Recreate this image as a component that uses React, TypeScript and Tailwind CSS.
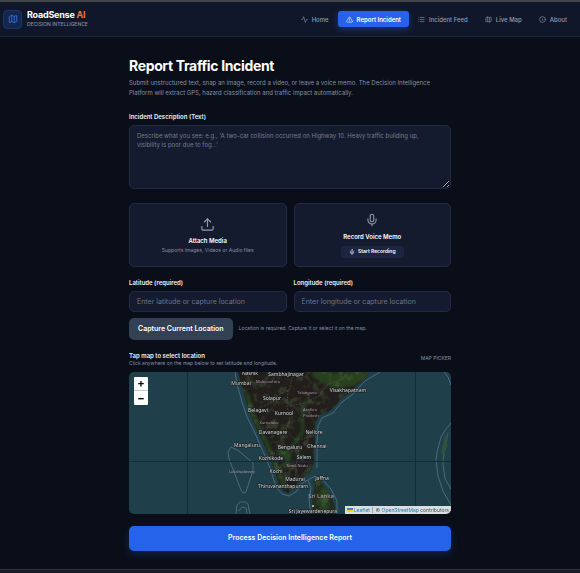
import { useState } from 'react'
import type { LucideIcon } from 'lucide-react'
import { Activity, Info, List, Map, Mic, TriangleAlert, Upload } from 'lucide-react'
import { clsx } from 'clsx'

interface NavItem {
  label: string
  icon: LucideIcon
  active?: boolean
}

interface MapLabel {
  text: string
  x: number
  y: number
  region?: boolean
}

const NAV_ITEMS: NavItem[] = [
  { label: 'Home', icon: Activity },
  { label: 'Report Incident', icon: TriangleAlert, active: true },
  { label: 'Incident Feed', icon: List },
  { label: 'Live Map', icon: Map },
  { label: 'About', icon: Info },
]

const MAP_LABELS: MapLabel[] = [
  { text: 'Nashik', x: 121, y: 3 },
  { text: 'Sambhajinagar', x: 157, y: 4 },
  { text: 'Mumbai', x: 112, y: 13 },
  { text: 'Maharashtra', x: 139, y: 11, region: true },
  { text: 'Telangana', x: 178, y: 22, region: true },
  { text: 'Visakhapatnam', x: 219, y: 20 },
  { text: 'Solapur', x: 143, y: 28 },
  { text: 'Belagavi', x: 129, y: 40 },
  { text: 'Kurnool', x: 155, y: 43 },
  { text: 'Andhra', x: 181, y: 39, region: true },
  { text: 'Pradesh', x: 182, y: 45, region: true },
  { text: 'Karnataka', x: 140, y: 52, region: true },
  { text: 'Davanagere', x: 144, y: 62 },
  { text: 'Nellore', x: 185, y: 62 },
  { text: 'Mangaluru', x: 118, y: 75 },
  { text: 'Bengaluru', x: 161, y: 77 },
  { text: 'Chennai', x: 188, y: 76 },
  { text: 'Kozhikode', x: 142, y: 88 },
  { text: 'Salem', x: 175, y: 87 },
  { text: 'Tamil Nadu', x: 168, y: 95, region: true },
  { text: 'Lakshadweep', x: 113, y: 101, region: true },
  { text: 'Kochi', x: 147, y: 101 },
  { text: 'Madurai', x: 166, y: 109 },
  { text: 'Jaffna', x: 193, y: 108 },
  { text: 'Thiruvananthapuram', x: 154, y: 116 },
  { text: 'Sri Jayewardenepura', x: 184, y: 141 },
]

const INDIA =
  'M109 0 L111 8 L114 18 L117 30 L122 45 L129 60 L134 71 L140 83 L145 96 L150 113 L155 119 L159 121 L165 116 L169 110 L177 103 L183 98 L185 90 L184 80 L186 70 L185 60 L187 50 L190 43 L198 41 L205 35 L212 27 L220 21 L228 13 L236 7 L241 0 Z'
const INDIA_WATERS =
  'M106 0 L108 12 L113 30 L118 45 L126 61 L131 73 L137 86 L142 99 L147 115 L153 122 L160 124 L168 119 L172 112 L179 108 M188 96 L188 70 L189 54 L193 46 L204 41 L212 31 L224 22 L236 9 L251 0'
const SRI_LANKA =
  'M184 108 L191 108 L195 114 L199 119 L203 126 L206 135 L204 143 L185 143 L183 133 L184 122 L186 114 Z'
const SRI_LANKA_WATERS = 'M182 143 L180 128 L182 116 L179 108 L186 104 L194 108 L202 117 L208 129 L208 143'

function TopBar() {
  return (
    <header className="flex h-[37px] items-center justify-between border-t-2 border-b border-t-[#42454a] border-b-[#1d263a] bg-[#11172a] pr-[5px] pl-[3px]">
      <div className="flex items-center gap-[5px]">
        <div className="flex size-[19px] items-center justify-center rounded-[4px] border border-[#1b3566] bg-[#14264d]">
          <Map className="size-[10px] text-[#3b72dd]" strokeWidth={2} />
        </div>
        <div>
          <div className="text-[9px] leading-[10px] font-bold tracking-tight text-white">
            RoadSense <span className="text-[#ee7634]">AI</span>
          </div>
          <div className="text-[5px] leading-[8px] font-medium text-[#8490a5] uppercase">Decision Intelligence</div>
        </div>
      </div>
      <nav className="flex items-center gap-px">
        {NAV_ITEMS.map(({ label, icon: Icon, active }) => (
          <a
            key={label}
            href="#"
            aria-current={active ? 'page' : undefined}
            className={clsx(
              'flex h-4 items-center gap-1 rounded-[3px] px-2 text-[6px] whitespace-nowrap',
              active
                ? 'bg-[#2563eb] font-semibold text-white shadow-[0_2px_6px_#2563eb66]'
                : 'font-medium text-[#8f9bb0]'
            )}
          >
            <Icon className="size-[7px]" strokeWidth={2} />
            {label}
          </a>
        ))}
      </nav>
    </header>
  )
}

function CoordinateField({ id, label, placeholder }: { id: string; label: string; placeholder: string }) {
  return (
    <div>
      <label htmlFor={id} className="block text-[6px] leading-[9px] font-semibold text-[#eef2f7]">
        {label}
      </label>
      <input
        id={id}
        type="text"
        placeholder={placeholder}
        className="mt-1 block h-[21px] w-full rounded-[5px] border border-[#222b43] bg-[#151b2e] px-[7px] text-[7px] text-white placeholder:text-[#697489]"
      />
    </div>
  )
}

function MapPicker() {
  const [zoom, setZoom] = useState(5)

  return (
    <div className="relative mt-[5px] h-[142px] overflow-hidden rounded-[5px] bg-[#1f404b]" data-zoom={zoom}>
      <svg
        viewBox="0 0 322 142"
        preserveAspectRatio="xMidYMid slice"
        className="block size-full"
        role="img"
        aria-label="Map of southern India and Sri Lanka"
      >
        <defs>
          <clipPath id="land">
            <path d={INDIA} />
            <path d={SRI_LANKA} />
          </clipPath>
          <filter id="terrain" x="0" y="0" width="100%" height="100%">
            <feTurbulence type="fractalNoise" baseFrequency="0.12" numOctaves="4" seed="8" />
            <feColorMatrix values="0 0 0 0 0.17  0 0 0 0 0.28  0 0 0 0 0.12  0 4 0 0 -1.95" />
          </filter>
          <filter id="soft">
            <feGaussianBlur stdDeviation="1.5" />
          </filter>
        </defs>

        {/* land */}
        <path d={INDIA} fill="#211e1b" />
        <path d={SRI_LANKA} fill="#242c1d" />
        <g clipPath="url(#land)">
          <g fill="none" stroke="#284220" filter="url(#soft)" strokeLinecap="round">
            <path d="M118 23 L124 43 L132 60 L141 79 L148 96 L156 115" strokeWidth="4" />
            <path d="M190 0 L205 9 L222 7 L236 0" strokeWidth="15" opacity="0.9" />
            <path d="M177 29 L173 43 L174 59 L164 73 L154 83" strokeWidth="3" />
            <path d="M150 79 L160 83 L157 93" strokeWidth="5" />
            <path d="M196 119 L195 136" strokeWidth="9" />
          </g>
          <rect x="100" width="145" height="142" filter="url(#terrain)" opacity="0.25" />
        </g>

        {/* state borders and roads */}
        <g fill="none" stroke="#766d68" strokeWidth="0.5" strokeDasharray="2 1" opacity="0.8">
          <path d="M122 41 L134 34 L142 31 L151 22 L160 18 L163 7 L170 0" />
          <path d="M159 18 L158 34 L161 47 L157 58 L165 67 L174 67 L185 63" />
          <path d="M161 34 L176 31 L190 24 L199 12 L212 8 L219 0" />
          <path d="M139 78 L148 83 L157 80 L165 74" />
          <path d="M151 83 L156 96 L157 117 M170 72 L168 88 L166 109" />
        </g>

        {/* maritime boundaries */}
        <g fill="none" stroke="#587486" strokeWidth="0.8">
          <path d={INDIA_WATERS} />
          <path d={SRI_LANKA_WATERS} />
          <path d="M102 75 L99 80 L100 87 L112 118 L114 121 L117 120 L124 98 L124 91 L110 79 Z" />
          <path d="M107 142 L108 133 L111 130 L116 130 L119 132 L121 142 M110 139 L113 135 L117 136 L118 142" />
          <path d="M315 0 L319 5 L322 13 M322 51 L317 57 L312 65 L308 80 L307 88 L309 104 L314 119 L322 133" />
          <path d="M319 61 L315 80 L314 92 L316 107 L322 117" />
        </g>
        <path d="M316 64 L319 62 L318 74 L315 83 L312 81 Z M313 87 L315 86 L314 92 Z" fill="#34503e" />

        {/* tile seams */}
        <path d="M58.5 0 V142 M286.5 0 V142 M0 89.5 H322" stroke="#122d35" strokeWidth="1" />

        <g fontFamily='"Noto Sans", sans-serif' textAnchor="middle">
          {MAP_LABELS.map(({ text, x, y, region }) => (
            <text
              key={text}
              x={x}
              y={y}
              fill={region ? '#b092b2' : '#d0d2d2'}
              fontSize={region ? 4 : 5}
              stroke={region ? 'none' : '#1c2022'}
              strokeWidth="1"
              paintOrder="stroke"
            >
              {text}
            </text>
          ))}
          <text x="192" y="126" fill="#b59db9" fontSize="6">
            Sri Lanka
          </text>
        </g>
        <circle cx="184" cy="134" r="1" fill="#d0d2d2" />
      </svg>

      <div className="absolute top-[5px] left-[5px] flex w-[14px] flex-col overflow-hidden rounded-[1px] bg-white text-black">
        <button
          type="button"
          aria-label="Zoom in"
          onClick={() => setZoom(zoom + 1)}
          className="h-[14px] border-b border-[#cccccc] text-[11px] leading-[13px] font-bold"
        >
          +
        </button>
        <button
          type="button"
          aria-label="Zoom out"
          onClick={() => setZoom(zoom - 1)}
          className="h-[14px] text-[11px] leading-[13px] font-bold"
        >
          −
        </button>
      </div>

      <div className="absolute right-0 bottom-0 flex items-center gap-[2px] bg-[#d9dfe1] px-[2px] text-[5px] leading-[8px] text-[#4c5356]">
        <a href="#" className="flex items-center gap-px text-[#1d7fa8]">
          <svg viewBox="0 0 12 8" className="h-1 w-[6px]" aria-hidden="true">
            <path fill="#4C7BE1" d="M0 0h12v4H0z" />
            <path fill="#FFD500" d="M0 4h12v4H0z" />
          </svg>
          Leaflet
        </a>
        <span>|</span>
        <span>
          © <a href="#" className="text-[#1d7fa8]">OpenStreetMap</a> contributors
        </span>
      </div>
    </div>
  )
}

function ReportForm() {
  return (
    <form onSubmit={(e) => e.preventDefault()}>
      <label htmlFor="description" className="block text-[6px] leading-[9px] font-semibold text-[#eef2f7]">
        Incident Description (Text)
      </label>
      <textarea
        id="description"
        placeholder="Describe what you see: e.g., 'A two-car collision occurred on Highway 10. Heavy traffic building up, visibility is poor due to fog...'"
        className="mt-1 block h-16 w-full rounded-[5px] border border-[#222b43] bg-[#151b2e] px-[7px] py-[5px] text-[6px] leading-[9px] text-white placeholder:text-[#727d92]"
      />

      <div className="mt-[14px] grid grid-cols-2 gap-[7px]">
        <label className="flex h-16 cursor-pointer flex-col items-center justify-center rounded-[5px] border border-[#222b43] bg-[#151b2e]">
          <Upload className="size-[15px] text-[#929db1]" strokeWidth={1.8} />
          <span className="mt-1 text-[6px] leading-[10px] font-semibold text-white">Attach Media</span>
          <span className="text-[5px] leading-[8px] text-[#8490a5]">Supports Images, Videos or Audio files</span>
          <input type="file" className="sr-only" />
        </label>
        <div className="flex h-16 flex-col items-center justify-center rounded-[5px] border border-[#222b43] bg-[#151b2e]">
          <Mic className="size-[14px] text-[#929db1]" strokeWidth={1.8} />
          <span className="mt-[5px] text-[6px] leading-[10px] font-semibold text-white">Record Voice Memo</span>
          <button
            type="button"
            className="mt-1 flex h-3 items-center gap-[3px] rounded-[3px] bg-[#1b2440] px-2 text-[5px] font-semibold text-white"
          >
            <Mic className="size-[6px]" strokeWidth={2} />
            Start Recording
          </button>
        </div>
      </div>

      <div className="mt-[11px] grid grid-cols-2 gap-[7px]">
        <CoordinateField id="latitude" label="Latitude (required)" placeholder="Enter latitude or capture location" />
        <CoordinateField id="longitude" label="Longitude (required)" placeholder="Enter longitude or capture location" />
      </div>

      <div className="mt-[6px] flex items-center gap-[6px]">
        <button type="button" className="h-[22px] rounded-[5px] bg-[#334155] px-[9px] text-[7px] font-semibold text-white">
          Capture Current Location
        </button>
        <p className="text-[5px] text-[#8490a5]">Location is required. Capture it or select it on the map.</p>
      </div>

      <div className="mt-[11px] flex items-center justify-between">
        <div>
          <h2 className="text-[6px] leading-[9px] font-semibold text-[#eef2f7]">Tap map to select location</h2>
          <p className="text-[5px] leading-[7px] text-[#8490a5]">
            Click anywhere on the map below to set latitude and longitude.
          </p>
        </div>
        <span className="text-[5px] text-[#8490a5] uppercase">Map picker</span>
      </div>
      <MapPicker />

      <button
        type="submit"
        className="mt-3 block h-[25px] w-full rounded-[5px] bg-[#2563eb] text-[7px] font-semibold text-white shadow-[0_3px_8px_#2563eb40]"
      >
        Process Decision Intelligence Report
      </button>
    </form>
  )
}

export default function App() {
  return (
    <div className="flex min-h-screen flex-col bg-[#0a0e18] font-['Inter',sans-serif]">
      <TopBar />
      <main className="mx-auto w-full max-w-[322px] grow pt-5 pb-[18px]">
        <h1 className="text-[14px] leading-[17px] font-bold tracking-tight text-white">Report Traffic Incident</h1>
        <p className="mt-1 mb-[14px] text-[6px] leading-[10px] text-[#8490a5]">
          Submit unstructured text, snap an image, record a video, or leave a voice memo. The Decision Intelligence
          Platform will extract GPS, hazard classification and traffic impact automatically.
        </p>
        <ReportForm />
      </main>
      <footer className="h-1 border-t border-[#30343d] bg-[#181d2b]" />
    </div>
  )
}
